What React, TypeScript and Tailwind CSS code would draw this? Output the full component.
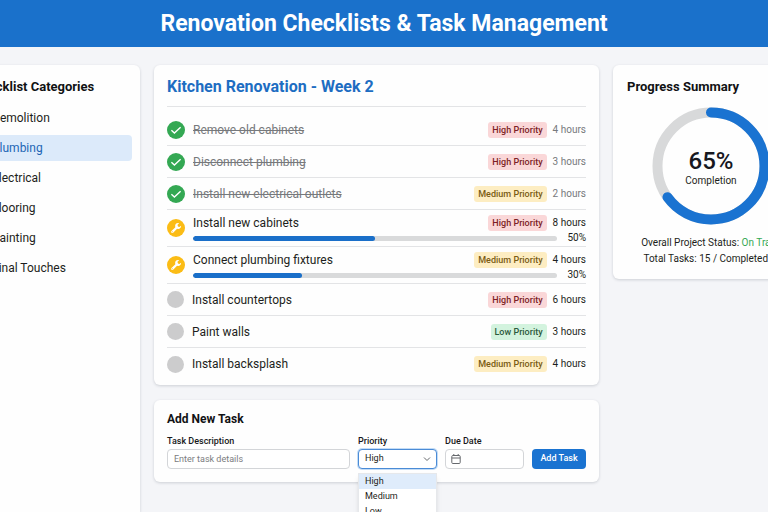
import React from "react";

type Priority = "High" | "Medium" | "Low";
type Status = "done" | "active" | "pending";

interface Task {
  name: string;
  priority: Priority;
  hours: number;
  status: Status;
  progress?: number;
}

const CATEGORIES = ["Demolition", "Plumbing", "Electrical", "Flooring", "Painting", "Final Touches"];

const TASKS: Task[] = [
  { name: "Remove old cabinets", priority: "High", hours: 4, status: "done" },
  { name: "Disconnect plumbing", priority: "High", hours: 3, status: "done" },
  { name: "Install new electrical outlets", priority: "Medium", hours: 2, status: "done" },
  { name: "Install new cabinets", priority: "High", hours: 8, status: "active", progress: 50 },
  { name: "Connect plumbing fixtures", priority: "Medium", hours: 4, status: "active", progress: 30 },
  { name: "Install countertops", priority: "High", hours: 6, status: "pending" },
  { name: "Paint walls", priority: "Low", hours: 3, status: "pending" },
  { name: "Install backsplash", priority: "Medium", hours: 4, status: "pending" },
];

const BADGE: Record<Priority, string> = {
  High: "bg-[#fad7d8] text-[#7d1f26]",
  Medium: "bg-[#fdedc2] text-[#7a5c14]",
  Low: "bg-[#d3f3de] text-[#2c5a3c]",
};

const CARD = "rounded-md bg-[#fefefe] shadow-[0_1px_3px_rgba(30,40,60,0.18)]";

function StatusIcon({ status }: { status: Status }) {
  if (status === "done") {
    return (
      <svg viewBox="0 0 18 18" className="size-[18px] shrink-0" aria-hidden="true">
        <circle cx="9" cy="9" r="9" fill="#34a853" />
        <path d="M4.4 9.2l3 2.8 6.2-5.8" fill="none" stroke="#fff" strokeWidth="1.4" />
      </svg>
    );
  }
  if (status === "active") {
    return (
      <svg viewBox="0 0 18 18" className="size-[18px] shrink-0" aria-hidden="true">
        <circle cx="9" cy="9" r="9" fill="#fbbc15" />
        <path d="M5.3 12.9L10 8.2" stroke="#fff" strokeWidth="2.3" strokeLinecap="round" />
        <path d="M12.2 4.2a3 3 0 1 0 1.9 2.5l-1.7 1.2-1.6-.5-.3-1.7z" fill="#fff" />
        <circle cx="5.4" cy="12.8" r=".5" fill="#fbbc15" />
      </svg>
    );
  }
  return <span className="size-[17px] shrink-0 rounded-full bg-[#cccccd]" />;
}

function TaskRow({ task }: { task: Task }) {
  const done = task.status === "done";
  const active = task.status === "active";
  return (
    <li
      className={`flex items-center gap-2 border-b border-[#e3e4e6] last:border-b-0 ${
        active ? "h-[37px]" : "h-8"
      }`}
    >
      <StatusIcon status={task.status} />
      <div className="min-w-0 flex-1">
        <div className={`flex items-center ${active ? "h-5" : ""}`}>
          <span
            className={`flex-1 truncate text-[12px] leading-4 ${
              done ? "text-[#77797c] line-through" : "text-[#1d1e20]"
            }`}
          >
            {task.name}
          </span>
          <span className={`rounded-[3px] px-1 text-[9px] font-medium leading-4 ${BADGE[task.priority]}`}>
            {task.priority} Priority
          </span>
          <span className={`ml-1.5 text-[10px] leading-4 ${done ? "text-[#77797c]" : "text-[#1d1e20]"}`}>
            {task.hours} hours
          </span>
        </div>
        {active && (
          <div className="flex h-2.5 items-center gap-2">
            <div className="h-[5px] flex-1 overflow-hidden rounded-full bg-[#d9dadb]">
              <div className="h-full rounded-full bg-[#1a6fc9]" style={{ width: `${task.progress}%` }} />
            </div>
            <span className="w-[21px] text-right text-[10px] leading-[10px] text-[#1d1e20]">{task.progress}%</span>
          </div>
        )}
      </div>
    </li>
  );
}

function ProgressRing({ value }: { value: number }) {
  const radius = 53.5;
  const circumference = 2 * Math.PI * radius;
  return (
    <div className="relative mx-auto size-[118px]">
      <svg viewBox="0 0 118 118" className="size-full -rotate-90" aria-hidden="true">
        <circle cx="59" cy="59" r={radius} fill="none" stroke="#d8d9da" strokeWidth="10" />
        <circle
          cx="59"
          cy="59"
          r={radius}
          fill="none"
          stroke="#1a73d1"
          strokeWidth="10"
          strokeLinecap="round"
          strokeDasharray={`${(circumference * value) / 100} ${circumference}`}
        />
      </svg>
      <div className="absolute inset-0 flex flex-col items-center justify-center pt-1.5">
        <span className="text-[24px] font-medium leading-6 text-[#17181f]">{value}%</span>
        <span className="text-[10px] leading-4 text-[#1d1e20]">Completion</span>
      </div>
    </div>
  );
}

const FIELD = "h-5 w-full rounded-[4px] border border-[#d3d5d8] bg-white text-[9px] text-[#1d1e20] outline-none";
const LABEL = "text-[9px] font-medium leading-3 text-[#17181a]";

function AddTask() {
  return (
    <section className={`${CARD} px-[13px] pb-[13px] pt-[11px]`}>
      <h2 className="text-[12px] font-bold leading-4 text-[#111214]">Add New Task</h2>
      <form className="mt-2 flex items-end gap-2" onSubmit={(e) => e.preventDefault()}>
        <div className="flex min-w-0 flex-1 flex-col gap-0.5">
          <label htmlFor="description" className={LABEL}>Task Description</label>
          <input
            id="description"
            placeholder="Enter task details"
            className={`${FIELD} px-1.5 placeholder:text-[#7b7d80]`}
          />
        </div>
        <div className="relative flex w-[79px] flex-col gap-0.5">
          <label htmlFor="priority" className={LABEL}>Priority</label>
          <div className="relative">
            <select
              id="priority"
              defaultValue="High"
              className="block h-5 w-full appearance-none rounded-[4px] border border-[#4a8bd6] bg-white px-1.5 text-[9px] text-[#1d1e20] shadow-[0_0_0_1px_#c3dcf6] outline-none"
            >
              <option>High</option>
              <option>Medium</option>
              <option>Low</option>
            </select>
            <svg viewBox="0 0 8 8" className="pointer-events-none absolute right-1.5 top-1.5 size-2" aria-hidden="true">
              <path d="M1 2.5l3 3 3-3" fill="none" stroke="#66696d" strokeWidth="1" />
            </svg>
          </div>
          <ul
            role="listbox"
            aria-label="Priority"
            className="absolute left-0 top-full mt-1 w-full border border-[#e6e8eb] bg-white text-[9px] leading-[15px] text-[#1d1e20] shadow-md"
          >
            <li role="option" aria-selected="true" className="bg-[#dfecfb] px-1.5">High</li>
            <li role="option" aria-selected="false" className="px-1.5">Medium</li>
            <li role="option" aria-selected="false" className="px-1.5">Low</li>
          </ul>
        </div>
        <div className="flex w-[79px] flex-col gap-0.5">
          <label htmlFor="due" className={LABEL}>Due Date</label>
          <div className="relative">
            <input id="due" type="text" className={`${FIELD} block pl-5 pr-1.5`} />
            <svg
              viewBox="0 0 10 10"
              className="pointer-events-none absolute left-1.5 top-[5px] size-2.5"
              fill="none"
              stroke="#66696d"
              strokeWidth="1"
              aria-hidden="true"
            >
              <rect x="0.8" y="1.5" width="8.4" height="8" rx="1" />
              <path d="M.8 4h8.4M2.8 0v2M7.2 0v2" />
            </svg>
          </div>
        </div>
        <button type="submit" className="h-5 w-[54px] rounded-[4px] bg-[#1a73d1] text-[9px] font-medium text-white">
          Add Task
        </button>
      </form>
    </section>
  );
}

export default function App() {
  return (
    <div className="flex min-h-screen flex-col overflow-hidden bg-[#f4f5f8] font-[Roboto,sans-serif]">
      <header className="bg-[#1a71cb] pb-[7px] pt-2 text-center">
        <h1 className="whitespace-nowrap text-[23px] font-bold leading-8 text-white">
          Renovation Checklists &amp; Task Management
        </h1>
      </header>
      <main className="-mx-[41px] grid flex-1 grid-cols-[181px_1fr_196px] gap-3.5 pt-[18px]">
        <nav className={`${CARD} rounded-b-none px-2 pt-3`}>
          <h2 className="px-1.5 text-[13px] font-bold leading-5 text-[#111214]">Checklist Categories</h2>
          <ul className="mt-2 flex flex-col gap-1">
            {CATEGORIES.map((name) => (
              <li key={name}>
                <a
                  href="#"
                  className={`block rounded-[4px] pl-[25px] text-[12px] leading-[26px] ${
                    name === "Plumbing" ? "bg-[#dceafa] text-[#1d66b5]" : "text-[#1d1e20]"
                  }`}
                >
                  {name}
                </a>
              </li>
            ))}
          </ul>
        </nav>
        <div className="flex min-w-0 flex-col gap-[15px]">
          <section className={`${CARD} px-[13px] pb-[5px]`}>
            <h2 className="border-b border-[#e3e4e6] pb-[7px] pt-2.5 text-[16px] font-bold leading-6 text-[#1d6dc2]">
              Kitchen Renovation - Week 2
            </h2>
            <ul className="pt-[7px]">
              {TASKS.map((task) => (
                <TaskRow key={task.name} task={task} />
              ))}
            </ul>
          </section>
          <AddTask />
        </div>
        <aside className={`${CARD} self-start px-3.5 py-3`}>
          <h2 className="text-[13px] font-bold leading-5 text-[#111214]">Progress Summary</h2>
          <div className="mt-2.5">
            <ProgressRing value={65} />
          </div>
          <div className="mt-2.5 whitespace-nowrap text-center text-[10px] leading-4 text-[#1d1e20]">
            <p>
              Overall Project Status: <span className="text-[#34a853]">On Track</span>
            </p>
            <p>Total Tasks: 15 / Completed: 8</p>
          </div>
        </aside>
      </main>
    </div>
  );
}
